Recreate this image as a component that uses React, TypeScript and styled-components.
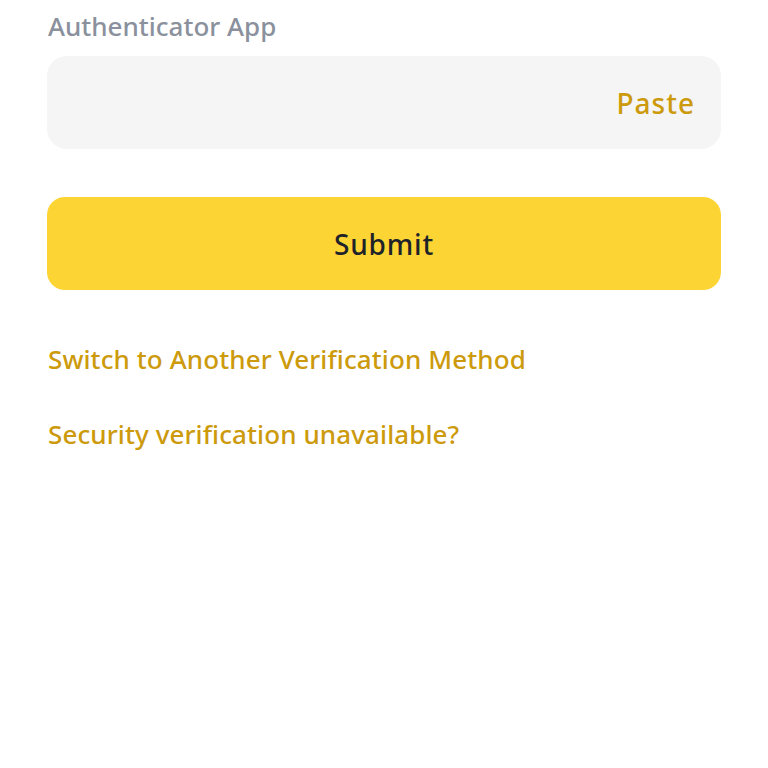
import React from "react";
import styled, { createGlobalStyle } from "styled-components";

const Global = createGlobalStyle`
  html, body { margin: 0; padding: 0; background: #ffffff; }
  body { font-family: "Noto Sans", "Open Sans", sans-serif; }
`;

const Page = styled.div`
  display: flex;
  flex-direction: column;
  padding: 8px 47px 0 47px;
  width: 768px;
  box-sizing: border-box;
`;

const Label = styled.div`
  font-size: 26px;
  font-weight: 500;
  color: #8a919d;
  line-height: 36px;
  padding-left: 1px;
`;

const InputBox = styled.div`
  margin-top: 12px;
  height: 93px;
  border-radius: 20px;
  background: #f5f5f5;
  display: flex;
  align-items: center;
  justify-content: flex-end;
  padding: 0 26px;
`;

const Paste = styled.span`
  font-size: 28px;
  font-weight: 500;
  letter-spacing: 1px;
  color: #cc9a0c;
`;

const SubmitButton = styled.button`
  margin-top: 48px;
  height: 93px;
  border: none;
  border-radius: 18px;
  background: #fcd535;
  color: #1e2329;
  font-family: inherit;
  font-size: 28px;
  font-weight: 500;
  letter-spacing: 0.8px;
  display: flex;
  align-items: center;
  justify-content: center;
`;

const LinkText = styled.div<{ $top: number }>`
  margin-top: ${(p) => p.$top}px;
  font-size: 26px;
  font-weight: 500;
  letter-spacing: 0.1px;
  color: #cc9a0c;
  line-height: 36px;
  padding-left: 1px;
`;

export default function App() {
  return (
    <>
      <Global />
      <Page>
        <Label>Authenticator App</Label>
        <InputBox>
          <Paste>Paste</Paste>
        </InputBox>
        <SubmitButton>Submit</SubmitButton>
        <LinkText $top={51}>Switch to Another Verification Method</LinkText>
        <LinkText $top={39}>Security verification unavailable?</LinkText>
      </Page>
    </>
  );
}
